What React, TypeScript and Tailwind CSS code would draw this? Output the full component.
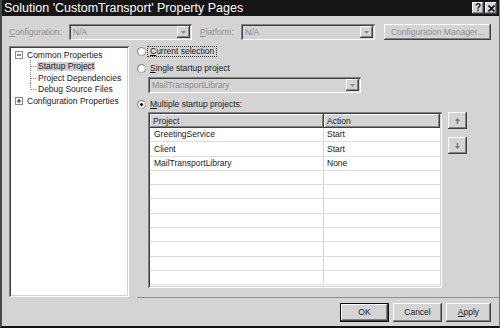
const sunken =
  "shadow-[inset_1px_1px_0_#808080,inset_-1px_-1px_0_#ffffff,inset_2px_2px_0_#404040,inset_-2px_-2px_0_#d4d4d4]";
const raised =
  "shadow-[inset_-1px_-1px_0_#404040,inset_1px_1px_0_#ffffff,inset_-2px_-2px_0_#808080]";

function Arrow() {
  return (
    <svg width="5" height="3" viewBox="0 0 5 3">
      <path d="M0 0h5L2.5 3z" fill="#8a8a8a" />
    </svg>
  );
}

function Combo({ width, value }: { width: string; value: string }) {
  return (
    <div className={`flex h-[16px] items-stretch p-[2px] ${sunken} ${width}`}>
      <span className="flex flex-1 items-center pl-[2px] text-[#8a8a8a]">{value}</span>
      <div className={`flex w-[13px] items-center justify-center ${raised}`}>
        <Arrow />
      </div>
    </div>
  );
}

function Radio({ checked, children }: { checked?: boolean; children: React.ReactNode }) {
  return (
    <div className="flex h-[11px] items-center">
      <svg width="9" height="9" viewBox="0 0 9 9" className="shrink-0">
        <circle cx="4.5" cy="4.5" r="4" fill="#fff" stroke="#6f6f6f" />
        <path d="M7.3 1.7A4 4 0 0 1 1.7 7.3" stroke="#e8e8e8" fill="none" />
        {checked && <circle cx="4.5" cy="4.5" r="1.6" fill="#111" />}
      </svg>
      <span className="ml-[2px] px-[2px]">{children}</span>
    </div>
  );
}

function TreeRow({
  kind,
  label,
  selected,
  last,
}: {
  kind: "open" | "closed" | "child";
  label: string;
  selected?: boolean;
  last?: boolean;
}) {
  if (kind === "child") {
    return (
      <div className="flex h-[11.5px] items-center">
        <svg width="26" height="12" viewBox="0 0 26 12" className="shrink-0">
          <path
            d={last ? "M19.5 0v6.5M20 6.5h5" : "M19.5 0v12M20 6.5h5"}
            stroke="#8a8a8a"
            strokeDasharray="1 1"
          />
        </svg>
        <span className={`px-[1px] ${selected ? "bg-[#cfcfcf]" : ""}`}>{label}</span>
      </div>
    );
  }
  return (
    <div className="flex h-[11.5px] items-center">
      <svg width="15" height="12" viewBox="0 0 15 12" className="shrink-0">
        <rect x="4.5" y="2.5" width="7" height="7" fill="#fff" stroke="#8a8a8a" />
        <path d="M6 6h4" stroke="#222" />
        {kind === "closed" && <path d="M8 4v4" stroke="#222" />}
      </svg>
      <span className="px-[1px]">{label}</span>
    </div>
  );
}

const rows = [
  ["GreetingService", "Start"],
  ["Client", "Start"],
  ["MailTransportLibrary", "None"],
  ["", ""],
  ["", ""],
  ["", ""],
  ["", ""],
  ["", ""],
  ["", ""],
  ["", ""],
  ["", ""],
  ["", ""],
];

export default function App() {
  return (
    <div className="flex h-[328px] w-[500px] flex-col overflow-hidden border-b-2 border-l-2 border-r border-b-[#111] border-l-[#4a4a4a] border-r-[#777] bg-[#d4d4d4] font-['Liberation_Sans',Arial,sans-serif] text-[8.5px] leading-none text-[#1a1a1a]">
      {/* title bar */}
      <div className="flex h-[16px] shrink-0 items-center bg-[#161616] pl-[2px] pr-[2px]">
        <span className="flex-1 text-[12.5px] text-white">Solution 'CustomTransport' Property Pages</span>
        <div className={`flex h-[12px] w-[12px] items-center justify-center bg-[#d4d4d4] text-[10px] font-bold ${raised}`}>
          ?
        </div>
        <div className={`ml-[1px] flex h-[12px] w-[12px] items-center justify-center bg-[#d4d4d4] ${raised}`}>
          <svg width="7" height="7" viewBox="0 0 7 7">
            <path d="M0.5 0.5l6 6M6.5 0.5l-6 6" stroke="#111" strokeWidth="1.6" />
          </svg>
        </div>
      </div>

      {/* configuration row */}
      <div className="mt-[8px] flex h-[16px] shrink-0 items-center pl-[7px] text-[#8f8f8f]">
        <span className="w-[60px]">
          <span className="underline">C</span>onfiguration:
        </span>
        <Combo width="w-[123px]" value="N/A" />
        <span className="ml-[8px] w-[41px]">
          <span className="underline">P</span>latform:
        </span>
        <Combo width="w-[134px]" value="N/A" />
        <div className={`ml-[9px] flex h-[16px] w-[107px] items-center justify-center ${raised}`}>
          Configuration Manager...
        </div>
      </div>

      {/* main area */}
      <div className="mt-[6px] flex">
        <div className={`ml-[7px] h-[251px] w-[120px] shrink-0 bg-white pt-[3px] pl-[2px] ${sunken}`}>
          <TreeRow kind="open" label="Common Properties" />
          <TreeRow kind="child" label="Startup Project" selected />
          <TreeRow kind="child" label="Project Dependencies" />
          <TreeRow kind="child" label="Debug Source Files" last />
          <TreeRow kind="closed" label="Configuration Properties" />
        </div>

        <div className="ml-[8px] flex h-[252px] flex-1 flex-col border-b border-[#8f8f8f]">
          <div className="flex h-[11px] items-center">
            <svg width="9" height="9" viewBox="0 0 9 9" className="shrink-0">
              <circle cx="4.5" cy="4.5" r="4" fill="#fff" stroke="#6f6f6f" />
              <path d="M7.3 1.7A4 4 0 0 1 1.7 7.3" stroke="#e8e8e8" fill="none" />
            </svg>
            <span className="ml-[1px] flex h-[11px] items-center border border-dotted border-[#333] px-[2px]">
              <span className="underline">C</span>urrent selection
            </span>
          </div>
          <div className="mt-[6px]">
            <Radio>
              <span className="underline">S</span>ingle startup project
            </Radio>
          </div>
          <div className="ml-[11px] mt-[3px]">
            <Combo width="w-[213px]" value="MailTransportLibrary" />
          </div>
          <div className="mt-[6px]">
            <Radio checked>
              <span className="underline">M</span>ultiple startup projects:
            </Radio>
          </div>

          <div className="ml-[11px] mt-[2px] flex gap-[6px]">
            <div className={`h-[176px] w-[294px] overflow-hidden bg-white p-[2px] ${sunken}`}>
              <div className="flex h-[14px]">
                <div className={`flex w-[174px] items-center bg-[#d4d4d4] pl-[3px] ${raised}`}>Project</div>
                <div className={`flex flex-1 items-center bg-[#d4d4d4] pl-[3px] ${raised}`}>Action</div>
              </div>
              {rows.map(([p, a], i) => (
                <div key={i} className="flex h-[14.3px] border-b border-[#dedede]">
                  <div className="flex w-[174px] items-center border-r border-[#d6d6d6] pl-[4px]">{p}</div>
                  <div className="flex flex-1 items-center pl-[3px]">{a}</div>
                </div>
              ))}
            </div>
            <div className="flex flex-col gap-[8px]">
              <div className={`flex h-[17px] w-[19px] items-center justify-center ${raised}`}>
                <svg width="5" height="6" viewBox="0 0 5 6">
                  <path d="M2.5 0L5 3H3.2V6H1.8V3H0z" fill="#777" />
                </svg>
              </div>
              <div className={`flex h-[17px] w-[19px] items-center justify-center ${raised}`}>
                <svg width="5" height="6" viewBox="0 0 5 6">
                  <path d="M2.5 6L5 3H3.2V0H1.8V3H0z" fill="#777" />
                </svg>
              </div>
            </div>
          </div>
        </div>
      </div>

      {/* dialog buttons */}
      <div className="mt-[5px] flex h-[19px] justify-end gap-[4px] pr-[8px]">
        <div className="flex w-[49px] border border-[#111]">
          <div className={`flex flex-1 items-center justify-center ${raised}`}>OK</div>
        </div>
        <div className={`flex w-[49px] items-center justify-center ${raised}`}>Cancel</div>
        <div className={`flex w-[45px] items-center justify-center ${raised}`}>
          <span>
            <span className="underline">A</span>pply
          </span>
        </div>
      </div>
    </div>
  );
}
